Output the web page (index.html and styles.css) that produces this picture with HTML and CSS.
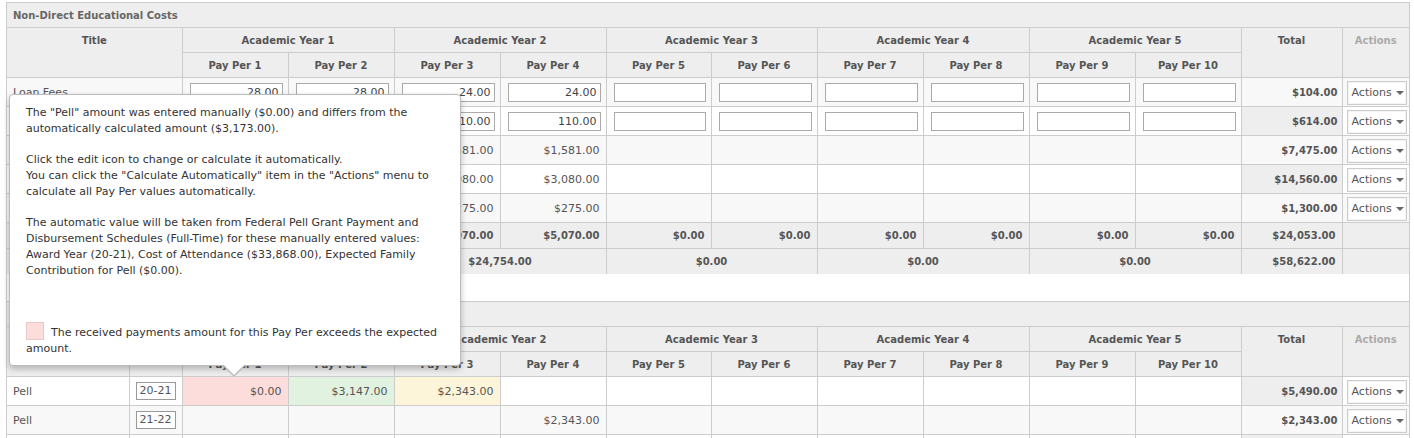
FILE: index.html
```html
<!DOCTYPE html>
<html>
<head>
<meta charset="utf-8">
<title>Costs</title>
<link rel="stylesheet" href="styles.css">
</head>
<body>
<div class="page">
  <div class="section">
    <div class="section-head">Non-Direct Educational Costs</div>
    <table class="grid">
      <colgroup>
        <col class="c-title"><col class="c-pp"><col class="c-pp"><col class="c-pp"><col class="c-pp"><col class="c-pp5"><col class="c-pp"><col class="c-pp"><col class="c-pp"><col class="c-pp"><col class="c-pp"><col class="c-total"><col class="c-act">
      </colgroup>
      <thead>
        <tr class="hr1">
          <th rowspan="2">Title</th>
          <th colspan="2">Academic Year 1</th>
          <th colspan="2">Academic Year 2</th>
          <th colspan="2">Academic Year 3</th>
          <th colspan="2">Academic Year 4</th>
          <th colspan="2">Academic Year 5</th>
          <th rowspan="2">Total</th>
          <th rowspan="2" class="muted">Actions</th>
        </tr>
        <tr class="hr2">
          <th>Pay Per 1</th><th>Pay Per 2</th><th>Pay Per 3</th><th>Pay Per 4</th><th>Pay Per 5</th><th>Pay Per 6</th><th>Pay Per 7</th><th>Pay Per 8</th><th>Pay Per 9</th><th>Pay Per 10</th>
        </tr>
      </thead>
      <tbody>
        <tr class="alt">
          <td class="lbl">Loan Fees</td>
          <td class="in"><input value="28.00"></td><td class="in"><input value="28.00"></td><td class="in"><input value="24.00"></td><td class="in"><input value="24.00"></td>
          <td class="in"><input value=""></td><td class="in"><input value=""></td><td class="in"><input value=""></td><td class="in"><input value=""></td><td class="in"><input value=""></td><td class="in"><input value=""></td>
          <td class="tot">$104.00</td>
          <td class="act"><button class="btn">Actions <span class="caret"></span></button></td>
        </tr>
        <tr>
          <td class="lbl">Other Fees</td>
          <td class="in"><input value="197.00"></td><td class="in"><input value="197.00"></td><td class="in"><input value="110.00"></td><td class="in"><input value="110.00"></td>
          <td class="in"><input value=""></td><td class="in"><input value=""></td><td class="in"><input value=""></td><td class="in"><input value=""></td><td class="in"><input value=""></td><td class="in"><input value=""></td>
          <td class="tot">$614.00</td>
          <td class="act"><button class="btn">Actions <span class="caret"></span></button></td>
        </tr>
        <tr class="alt">
          <td class="lbl">Books and Supplies</td>
          <td class="num">$2,156.00</td><td class="num">$2,157.00</td><td class="num">$1,581.00</td><td class="num">$1,581.00</td>
          <td></td><td></td><td></td><td></td><td></td><td></td>
          <td class="tot">$7,475.00</td>
          <td class="act"><button class="btn">Actions <span class="caret"></span></button></td>
        </tr>
        <tr>
          <td class="lbl">Room and Board</td>
          <td class="num">$4,200.00</td><td class="num">$4,200.00</td><td class="num">$3,080.00</td><td class="num">$3,080.00</td>
          <td></td><td></td><td></td><td></td><td></td><td></td>
          <td class="tot">$14,560.00</td>
          <td class="act"><button class="btn">Actions <span class="caret"></span></button></td>
        </tr>
        <tr class="alt">
          <td class="lbl">Transportation</td>
          <td class="num">$375.00</td><td class="num">$375.00</td><td class="num">$275.00</td><td class="num">$275.00</td>
          <td></td><td></td><td></td><td></td><td></td><td></td>
          <td class="tot">$1,300.00</td>
          <td class="act"><button class="btn">Actions <span class="caret"></span></button></td>
        </tr>
        <tr class="sum">
          <td class="lbl">Total</td>
          <td class="num">$6,957.00</td><td class="num">$6,957.00</td><td class="num">$5,070.00</td><td class="num">$5,070.00</td>
          <td class="num">$0.00</td><td class="num">$0.00</td><td class="num">$0.00</td><td class="num">$0.00</td><td class="num">$0.00</td><td class="num">$0.00</td>
          <td class="num">$24,053.00</td>
          <td></td>
        </tr>
        <tr class="sum year">
          <td class="lbl">Year Total</td>
          <td colspan="2" class="ctr">$33,868.00</td>
          <td colspan="2" class="ctr">$24,754.00</td>
          <td colspan="2" class="ctr">$0.00</td>
          <td colspan="2" class="ctr">$0.00</td>
          <td colspan="2" class="ctr">$0.00</td>
          <td class="num">$58,622.00</td>
          <td></td>
        </tr>
      </tbody>
    </table>
  </div>

  <div class="section gap">
    <div class="section-head">Grants</div>
    <table class="grid">
      <colgroup>
        <col class="c-name"><col class="c-year"><col class="c-pp"><col class="c-pp"><col class="c-pp"><col class="c-pp"><col class="c-pp5"><col class="c-pp"><col class="c-pp"><col class="c-pp"><col class="c-pp"><col class="c-pp"><col class="c-total"><col class="c-act">
      </colgroup>
      <thead>
        <tr class="hr1">
          <th rowspan="2">Title</th>
          <th rowspan="2">Year</th>
          <th colspan="2">Academic Year 1</th>
          <th colspan="2">Academic Year 2</th>
          <th colspan="2">Academic Year 3</th>
          <th colspan="2">Academic Year 4</th>
          <th colspan="2">Academic Year 5</th>
          <th rowspan="2">Total</th>
          <th rowspan="2" class="muted">Actions</th>
        </tr>
        <tr class="hr2">
          <th>Pay Per 1</th><th>Pay Per 2</th><th>Pay Per 3</th><th>Pay Per 4</th><th>Pay Per 5</th><th>Pay Per 6</th><th>Pay Per 7</th><th>Pay Per 8</th><th>Pay Per 9</th><th>Pay Per 10</th>
        </tr>
      </thead>
      <tbody>
        <tr>
          <td class="lbl">Pell</td>
          <td class="yr"><span class="yrbox">20-21</span></td>
          <td class="num over">$0.00</td><td class="num ok">$3,147.00</td><td class="num pend">$2,343.00</td><td></td>
          <td></td><td></td><td></td><td></td><td></td><td></td>
          <td class="tot">$5,490.00</td>
          <td class="act"><button class="btn">Actions <span class="caret"></span></button></td>
        </tr>
        <tr class="alt">
          <td class="lbl">Pell</td>
          <td class="yr"><span class="yrbox">21-22</span></td>
          <td></td><td></td><td></td><td class="num pend">$2,343.00</td>
          <td></td><td></td><td></td><td></td><td></td><td></td>
          <td class="tot">$2,343.00</td>
          <td class="act"><button class="btn">Actions <span class="caret"></span></button></td>
        </tr>
        <tr>
          <td class="lbl">SEOG</td>
          <td class="yr"><span class="yrbox">20-21</span></td>
          <td></td><td></td><td></td><td></td>
          <td></td><td></td><td></td><td></td><td></td><td></td>
          <td class="tot">$0.00</td>
          <td class="act"></td>
        </tr>
      </tbody>
    </table>
  </div>

  <div class="tip">
    <p>The "Pell" amount was entered manually ($0.00) and differs from the<br>automatically calculated amount ($3,173.00).</p>
    <p>Click the edit icon to change or calculate it automatically.<br>You can click the "Calculate Automatically" item in the "Actions" menu to<br>calculate all Pay Per values automatically.</p>
    <p>The automatic value will be taken from Federal Pell Grant Payment and<br>Disbursement Schedules (Full-Time) for these manually entered values:<br>Award Year (20-21), Cost of Attendance ($33,868.00), Expected Family<br>Contribution for Pell ($0.00).</p>
    <p class="legend"><span class="swatch"></span>The received payments amount for this Pay Per exceeds the expected<br>amount.</p>
  </div>
</div>
</body>
</html>
```
FILE: styles.css
```css
html, body {
  margin: 0;
  padding: 0;
  background: #fff;
}
body {
  font-family: "DejaVu Sans", Verdana, sans-serif;
  font-size: 11px;
  color: #555;
}
.page {
  position: relative;
  margin: 2px 4px 0 6px;
  border-left: 1px solid #ccc;
  border-right: 1px solid #ccc;
}
.section.gap {
  margin-top: 27px;
}
.section-head {
  height: 24px;
  line-height: 25px;
  border-top: 1px solid #ccc;
  border-bottom: 1px solid #ccc;
  background: #eee;
  padding-left: 6px;
  font-size: 10px;
  font-weight: bold;
  color: #666;
}
.grid {
  width: 100%;
  table-layout: fixed;
  border-collapse: collapse;
  border-style: hidden;
}
.c-title { width: 175px; }
.c-name { width: 122px; }
.c-year { width: 53px; }
.c-pp { width: 106px; }
.c-pp5 { width: 105px; }
.c-total { width: 101px; }
.c-act { width: 67px; }
.grid th, .grid td {
  border: 1px solid #ccc;
  padding: 0;
  white-space: nowrap;
  overflow: hidden;
}
.grid th {
  background: #eee;
  font-size: 10px;
  font-weight: bold;
  color: #555;
  text-align: center;
  vertical-align: top;
  line-height: 22px;
  padding-top: 2px;
}
.grid .hr1 th, .grid .hr2 th {
  height: 22px;
}
.grid th.muted {
  color: #aaa;
}
.grid tbody td {
  height: 28px;
  background: #fff;
}
.grid tbody tr.alt td {
  background: #f8f8f8;
}
.grid td.lbl {
  padding-left: 6px;
  text-align: left;
}
.grid td.num {
  text-align: right;
  padding-right: 6px;
}
.grid td.in {
  padding: 0 6px 0 6px;
}
.grid td.in input {
  display: block;
  box-sizing: border-box;
  width: 100%;
  height: 19px;
  margin: 0 0 0 1px;
  border: 1px solid #aaa;
  background: #fff;
  padding: 0 3px;
  font-family: "DejaVu Sans", Verdana, sans-serif;
  font-size: 11px;
  color: #444;
  text-align: right;
}
.grid tbody td.tot {
  background: #eee;
  font-size: 10px;
  font-weight: bold;
  text-align: right;
  padding-right: 4px;
}
.grid td.act {
  padding-left: 4px;
}
.btn {
  display: flex;
  align-items: center;
  gap: 4px;
  box-sizing: border-box;
  width: 60px;
  height: 24px;
  margin-top: 1px;
  padding: 0 0 0 4px;
  border: 1px solid #ccc;
  box-shadow: inset 0 0 0 1px #f4f4f4;
  background: #fff;
  font-family: "DejaVu Sans", Verdana, sans-serif;
  font-size: 11px;
  color: #555;
}
.caret {
  display: inline-block;
  width: 0;
  height: 0;
  border-left: 4px solid transparent;
  border-right: 4px solid transparent;
  border-top: 4px solid #666;
}
.grid tbody tr.sum td {
  background: #eee;
  height: 25px;
  font-size: 10px;
  font-weight: bold;
}
.grid tbody tr.sum td.ctr {
  text-align: center;
}
.grid td.yr {
  padding-left: 6px;
}
.yrbox {
  display: inline-block;
  box-sizing: border-box;
  width: 40px;
  height: 18px;
  line-height: 16px;
  border: 1px solid #999;
  background: #fff;
  text-align: center;
  color: #555;
}
.grid tbody td.over { background: #fddcdc; }
.grid tbody td.ok { background: #e2f2e0; }
.grid tbody td.pend { background: #fcf5da; }

.tip {
  position: absolute;
  left: 2px;
  top: 92px;
  width: 452px;
  box-sizing: border-box;
  padding: 10px 16px 8px 16px;
  background: #fff;
  border: 1px solid #bbb;
  border-radius: 4px;
  box-shadow: 0 3px 6px rgba(0, 0, 0, 0.25);
  color: #333;
  font-size: 11px;
  line-height: 16px;
  white-space: nowrap;
}
.tip p {
  margin: 0 0 15px 0;
}
.tip p.legend {
  margin: 46px 0 0 0;
}
.swatch {
  display: inline-block;
  box-sizing: border-box;
  width: 18px;
  height: 18px;
  margin: -4px 7px 0 0;
  vertical-align: -4px;
  background: #fddcdc;
  border: 1px solid #e8c8c8;
}
.tip::before, .tip::after {
  content: "";
  position: absolute;
  left: 213px;
  width: 0;
  height: 0;
  border-left: 11px solid transparent;
  border-right: 11px solid transparent;
}
.tip::before {
  bottom: -12px;
  border-top: 11px solid #bbb;
}
.tip::after {
  bottom: -10px;
  border-top: 11px solid #fff;
}
```
